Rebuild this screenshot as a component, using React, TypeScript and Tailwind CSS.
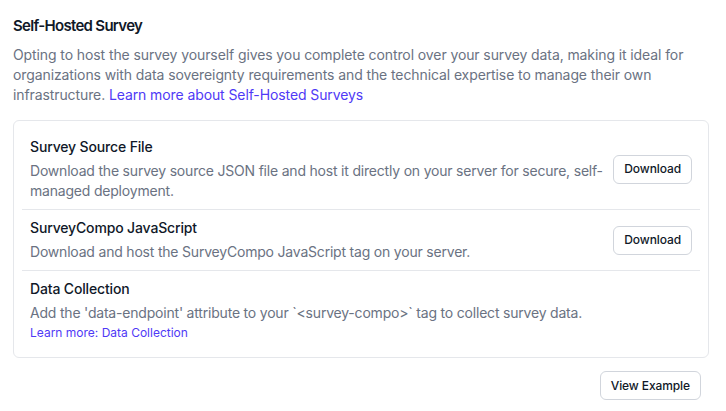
import React from "react";

const rows = [
  {
    title: "Survey Source File",
    desc: "Download the survey source JSON file and host it directly on your server for secure, self-managed deployment.",
    action: "Download",
  },
  {
    title: "SurveyCompo JavaScript",
    desc: "Download and host the SurveyCompo JavaScript tag on your server.",
    action: "Download",
  },
  {
    title: "Data Collection",
    desc: "Add the 'data-endpoint' attribute to your `<survey-compo>` tag to collect survey data.",
    link: "Learn more: Data Collection",
  },
];

function OutlineButton({ children }: { children: React.ReactNode }) {
  return (
    <button className="h-[29px] shrink-0 rounded-md border border-gray-300 bg-white px-[10px] text-xs font-medium tracking-[-0.1px] text-gray-900">
      {children}
    </button>
  );
}

export default function App() {
  return (
    <div className="min-h-screen bg-white pl-[13px] pr-[17px] pt-3 pb-[10px] font-['Inter',sans-serif]">
      <h2 className="text-[15px] font-semibold leading-7 tracking-[-0.7px] text-gray-900">Self-Hosted Survey</h2>
      <p className="mt-[5px] text-sm leading-5 tracking-[-0.1px] text-gray-500">
        Opting to host the survey yourself gives you complete control over your survey data, making it ideal for
        organizations with data sovereignty requirements and the technical expertise to manage their own
        infrastructure.{" "}
        <a href="#" className="text-indigo-600">
          Learn more about Self-Hosted Surveys
        </a>
      </p>

      {/* Options card */}
      <div className="mt-[15px] divide-y divide-gray-200 rounded-md border border-gray-200 p-2">
        {rows.map((row) => (
          <div key={row.title} className="flex items-center gap-1.5 px-2 py-2">
            <div className="min-w-0 flex-1">
              <h3 className="text-sm font-medium leading-5 tracking-[-0.15px] text-gray-900">{row.title}</h3>
              <p className="mt-1 text-sm leading-5 tracking-[-0.2px] text-gray-500">{row.desc}</p>
              {row.link && (
                <a href="#" className="mt-0.5 block text-xs leading-4 text-indigo-600">
                  {row.link}
                </a>
              )}
            </div>
            {row.action && <OutlineButton>{row.action}</OutlineButton>}
          </div>
        ))}
      </div>

      <div className="mt-[13px] flex justify-end px-2">
        <OutlineButton>View Example</OutlineButton>
      </div>
    </div>
  );
}
